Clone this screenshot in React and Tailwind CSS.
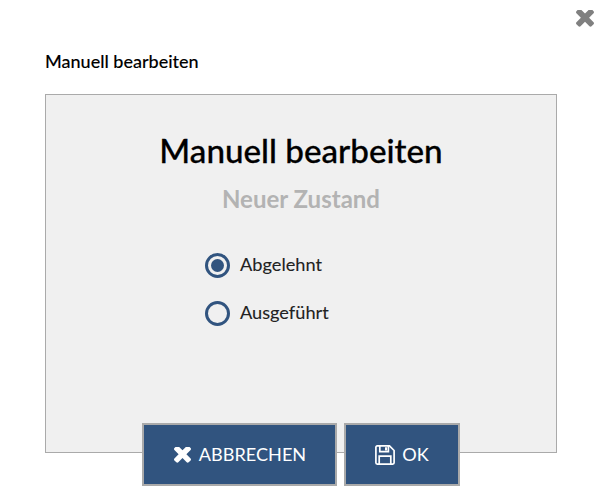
import React from "react";

const TIMES = "M1298 1202q0 40-28 68l-136 136q-28 28-68 28t-68-28l-294-294-294 294q-28 28-68 28t-68-28l-136-136q-28-28-28-68t28-68l294-294-294-294q-28-28-28-68t28-68l136-136q28-28 68-28t68 28l294 294 294-294q28-28 68-28t68 28l136 136q28 28 28 68t-28 68l-294 294 294 294q28 28 28 68z";

function XIcon({ className }) {
  return (
    <svg viewBox="110 354 1188 1080" className={className} fill="currentColor">
      <path d={TIMES} />
    </svg>
  );
}

function SaveIcon({ className }) {
  return (
    <svg viewBox="0 0 20 20" className={className} fill="none" stroke="currentColor" strokeWidth="1.7">
      <path d="M.9 2.2a1.3 1.3 0 0 1 1.3-1.3h12.3l4.6 4.6v12.3a1.3 1.3 0 0 1-1.3 1.3H2.2a1.3 1.3 0 0 1-1.3-1.3z" />
      <path d="M4.8 1v5.6h8.6V1M4.2 19v-7.8h11.6V19" />
      <path d="M11 2.2v3.2" strokeWidth="2" />
    </svg>
  );
}

function Radio({ label, checked }) {
  return (
    <div className="flex items-center h-[48px]">
      <span className="w-[25px] h-[25px] rounded-full border-[3px] border-[#31547f] flex items-center justify-center">
        {checked && <span className="w-[13px] h-[13px] rounded-full bg-[#31547f]" />}
      </span>
      <span className="ml-[10px] text-[18.2px] text-[#222] [-webkit-text-stroke:0.1px_#222]">{label}</span>
    </div>
  );
}

export default function App() {
  return (
    <div className="relative w-[600px] h-[504px] bg-white overflow-hidden font-['Lato',sans-serif]">
      <XIcon className="absolute left-[576px] top-[10px] text-[#808080] w-[18px] h-[17px]" />
      <div className="pt-[50px] px-[45px]">
        <h2 className="text-[18px] leading-[22px] font-medium text-black [-webkit-text-stroke:0.1px_black]">Manuell bearbeiten</h2>
        <div className="mt-[22px] w-[512px] h-[359px] bg-[#f0f0f0] border border-[#aaaaaa] flex flex-col items-center">
          <h1 className="mt-[33px] text-[33.2px] leading-[44px] font-medium text-black [-webkit-text-stroke:0.3px_black]">Manuell bearbeiten</h1>
          <h3 className="mt-[11px] text-[24px] leading-[32px] font-bold text-[#b3b3b3]">Neuer Zustand</h3>
          <div className="mt-[26px] self-start ml-[159px] flex flex-col">
            <Radio label="Abgelehnt" checked />
            <Radio label="Ausgeführt" />
          </div>
        </div>
        <div className="flex mt-[-30px] ml-[97px] gap-[7px] relative">
          <button className="w-[195px] h-[63px] pl-[1px] bg-[#31547f] border-2 border-[#aaaaaa] text-white text-[18.1px] flex items-center justify-center">
            <XIcon className="w-[17px] h-[16px] mr-[8px]" />
            ABBRECHEN
          </button>
          <button className="w-[116px] h-[63px] bg-[#31547f] border-2 border-[#aaaaaa] text-white text-[18.1px] flex items-center justify-center">
            <SaveIcon className="w-[20px] h-[20px] mr-[7px]" />
            OK
          </button>
        </div>
      </div>
    </div>
  );
}
